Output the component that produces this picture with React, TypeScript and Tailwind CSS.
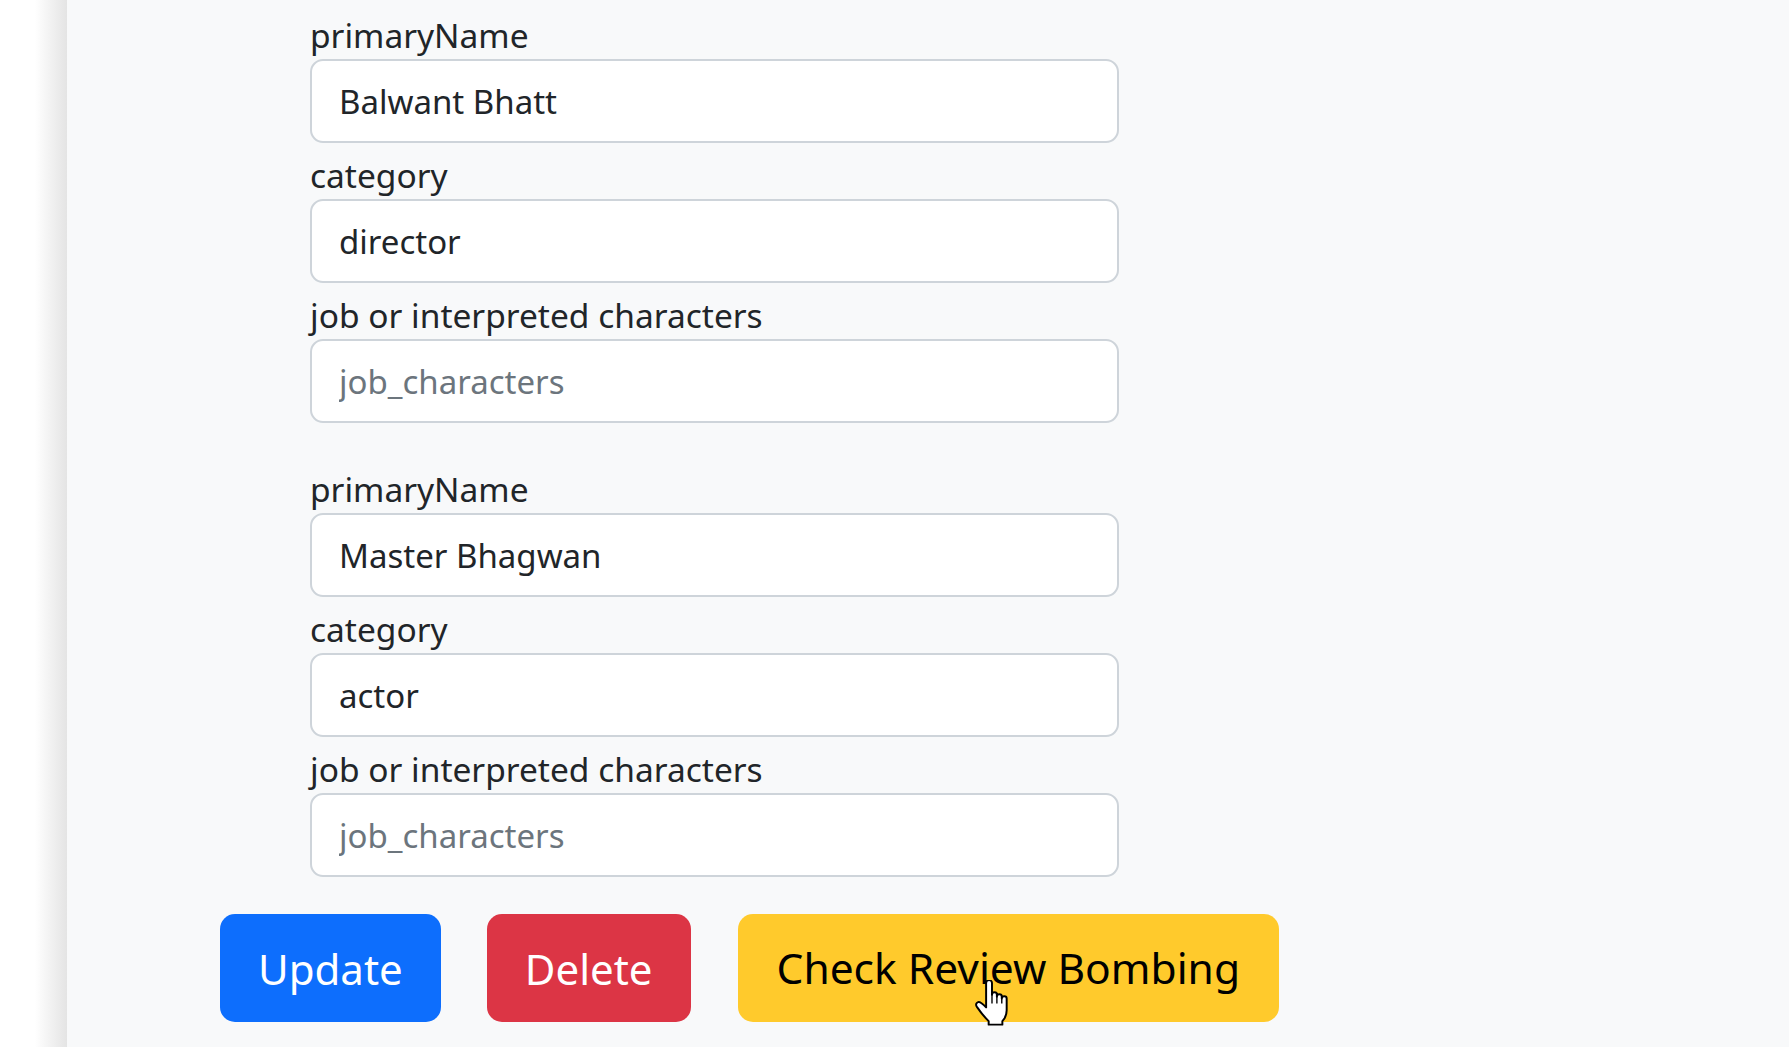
import React from "react";

const font = { fontFamily: '"Noto Sans", "Open Sans", sans-serif' };

function Field({ label, value, placeholder }: { label: string; value?: string; placeholder?: string }) {
  return (
    <div className="flex flex-col">
      <label className="mt-[8px] block text-[33.5px] leading-[48px] text-[#212529]">{label}</label>
      <input
        readOnly
        defaultValue={value}
        placeholder={placeholder}
        className="h-[84px] w-[809px] rounded-[13px] border-2 border-[#ced4da] bg-white px-[27px] text-[33px] text-[#212529] outline-none placeholder:text-[#6c757d]"
        style={font}
      />
    </div>
  );
}

function HandCursor() {
  return (
    <svg width="35" height="46" viewBox="0 0 17.5 23.5" className="absolute left-[236px] top-[66px]">
      <path
        d="M6,1.5 C6,0.7 6.7,0 7.5,0 C8.3,0 9,0.7 9,1.5 L9,7.5 C9,6.8 9.6,6.3 10.3,6.3 C11,6.3 11.5,6.8 11.5,7.5 L11.5,8.5 C11.5,7.8 12.1,7.3 12.8,7.3 C13.5,7.3 14,7.8 14,8.5 L14,9.5 C14,8.8 14.6,8.3 15.3,8.3 C16,8.3 16.5,8.8 16.5,9.5 L16.5,15.5 C16.5,18 15.5,19.8 14.3,21 L14.3,22.8 L7.3,22.8 L7.3,21 C5.2,19 2.3,15.2 1.2,13.6 C0.6,12.6 0.9,11.6 1.9,11.3 C2.9,11 3.9,11.8 6,14 Z"
        fill="white"
        stroke="black"
        strokeWidth="1"
        strokeLinejoin="round"
      />
      <path d="M9,7.5 L9,12 M11.5,8.5 L11.5,12 M14,9.5 L14,12" stroke="black" strokeWidth="0.7" fill="none" />
    </svg>
  );
}

export default function App() {
  return (
    <div className="flex h-[1047px] w-full overflow-hidden bg-[#f8f9fa]" style={font}>
      <div className="h-full w-[67px] shrink-0 bg-gradient-to-r from-white from-[52%] to-[#e4e4e4]" />
      <main className="flex flex-1 flex-col pl-[153px] pt-[3px]">
        <div className="flex flex-col pl-[90px]">
          <Field label="primaryName" value="Balwant Bhatt" />
          <Field label="category" value="director" />
          <Field label="job or interpreted characters" placeholder="job_characters" />
          <div className="h-[34px]" />
          <Field label="primaryName" value="Master Bhagwan" />
          <Field label="category" value="actor" />
          <Field label="job or interpreted characters" placeholder="job_characters" />
        </div>
        <div className="mt-[37px] flex items-center">
          <button className="h-[108px] rounded-[15px] bg-[#0d6efd] px-[38px] text-[42px] text-white">Update</button>
          <button className="ml-[46px] h-[108px] rounded-[15px] bg-[#dc3545] px-[38px] text-[42px] text-white">Delete</button>
          <div className="relative ml-[47px]">
            <button className="h-[108px] rounded-[15px] bg-[#ffca2c] px-[39px] text-[42.5px] text-black">Check Review Bombing</button>
            <HandCursor />
          </div>
        </div>
      </main>
    </div>
  );
}
